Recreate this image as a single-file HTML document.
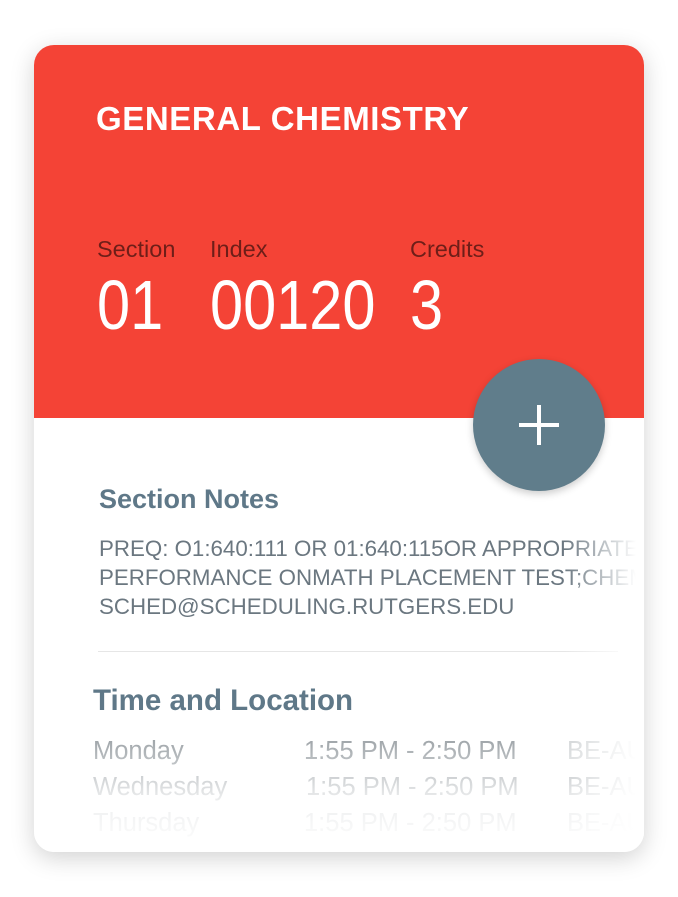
<!DOCTYPE html>
<html><head><style>
body{margin:0;width:678px;height:897px;background:#fff;position:relative;overflow:hidden;font-family:"Liberation Sans",sans-serif}
.card{position:absolute;left:34px;top:45px;width:610px;height:807px;border-radius:20px;background:#fff;box-shadow:0 6px 24px rgba(0,0,0,.18);overflow:hidden}
.red{position:absolute;left:0;top:0;width:610px;height:373px;background:#f44336}
.t{position:absolute;white-space:nowrap}
.title{left:62px;top:55px;font-size:33px;font-weight:bold;color:#fff;letter-spacing:0.6px}
.lab{top:191px;font-size:23.5px;color:rgba(0,0,0,.55)}
.num{top:220px;font-size:70px;color:#fff;transform:scaleX(.85);transform-origin:left}
.fab{position:absolute;left:439px;top:314px;width:132px;height:132px;border-radius:50%;background:#607d8b;box-shadow:0 3px 8px rgba(0,0,0,.2)}
.h{font-weight:bold;color:#5f7888}
.note{font-size:22.3px;color:#6b7780;line-height:29px}
.row{font-size:25.5px;color:#8d9499}
.fadeR{position:absolute;left:530px;top:373px;width:80px;height:434px;background:linear-gradient(to right,rgba(255,255,255,0),#fff 90%)}
.fadeB{position:absolute;left:0;top:680px;width:610px;height:127px;background:linear-gradient(to bottom,rgba(255,255,255,0),rgba(255,255,255,.85) 60%,#fff)}
</style></head><body>
<div class="card">
<div class="red"></div>
<div class="t title">GENERAL CHEMISTRY</div>
<div class="t lab" style="left:63px">Section</div>
<div class="t lab" style="left:176px">Index</div>
<div class="t lab" style="left:376px">Credits</div>
<div class="t num" style="left:63px">01</div>
<div class="t num" style="left:176px">00120</div>
<div class="t num" style="left:376px">3</div>
<div class="t h" style="left:65px;top:439px;font-size:27px">Section Notes</div>
<div class="t note" style="left:65px;top:489px">PREQ: O1:640:111 OR 01:640:115OR APPROPRIATE<br>PERFORMANCE ONMATH PLACEMENT TEST;CHEM<br>SCHED@SCHEDULING.RUTGERS.EDU</div>
<div style="position:absolute;left:64px;top:606px;width:520px;height:1px;background:#e6e6e6"></div>
<div class="t h" style="left:59px;top:639px;font-size:29.5px">Time and Location</div>
<div class="t row" style="left:59px;top:692px">Monday</div>
<div class="t row" style="left:270px;top:692px">1:55 PM - 2:50 PM</div>
<div class="t row" style="left:533px;top:692px;color:#c8ccce">BE-AUD</div>
<div class="t row" style="left:59px;top:728px">Wednesday</div>
<div class="t row" style="left:272px;top:728px">1:55 PM - 2:50 PM</div>
<div class="t row" style="left:533px;top:728px">BE-AUD</div>
<div class="t row" style="left:59px;top:764px">Thursday</div>
<div class="t row" style="left:270px;top:764px">1:55 PM - 2:50 PM</div>
<div class="t row" style="left:533px;top:764px">BE-AUD</div>
<div class="fadeB"></div>
<div class="fadeR"></div>
<div class="fab"><svg width="132" height="132"><path d="M66 46V86M46 66H86" stroke="#fff" stroke-width="4"/></svg></div>
</div>
</body></html>
